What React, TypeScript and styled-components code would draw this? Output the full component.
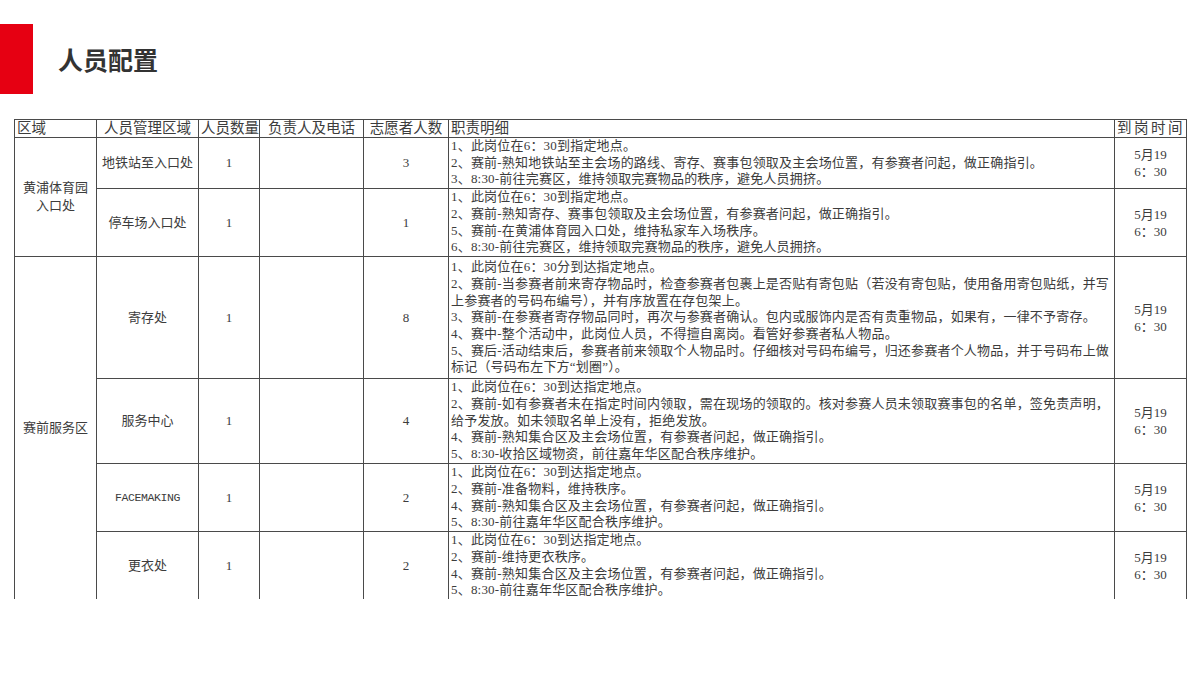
import React from "react";
import styled, { createGlobalStyle } from "styled-components";

const GlobalStyle = createGlobalStyle`
  html, body {
    margin: 0;
    padding: 0;
    background: #ffffff;
  }
  body {
    font-family: "Liberation Serif", "Noto Sans CJK SC", serif;
    color: #3c3c3c;
  }
`;

type Row = {
  name: string;
  count: string;
  volunteers: string;
  lines: string[];
  h: number;
  mono?: boolean;
};

type Group = {
  area: string[];
  rows: Row[];
};

const groups: Group[] = [
  {
    area: ["黄浦体育园", "入口处"],
    rows: [
      {
        name: "地铁站至入口处",
        count: "1",
        volunteers: "3",
        h: 51,
        lines: [
          "1、此岗位在6：30到指定地点。",
          "2、赛前-熟知地铁站至主会场的路线、寄存、赛事包领取及主会场位置，有参赛者问起，做正确指引。",
          "3、8:30-前往完赛区，维持领取完赛物品的秩序，避免人员拥挤。",
        ],
      },
      {
        name: "停车场入口处",
        count: "1",
        volunteers: "1",
        h: 68,
        lines: [
          "1、此岗位在6：30到指定地点。",
          "2、赛前-熟知寄存、赛事包领取及主会场位置，有参赛者问起，做正确指引。",
          "5、赛前-在黄浦体育园入口处，维持私家车入场秩序。",
          "6、8:30-前往完赛区，维持领取完赛物品的秩序，避免人员拥挤。",
        ],
      },
    ],
  },
  {
    area: ["赛前服务区"],
    rows: [
      {
        name: "寄存处",
        count: "1",
        volunteers: "8",
        h: 122,
        lines: [
          "1、此岗位在6：30分到达指定地点。",
          "2、赛前-当参赛者前来寄存物品时，检查参赛者包裹上是否贴有寄包贴（若没有寄包贴，使用备用寄包贴纸，并写",
          "上参赛者的号码布编号），并有序放置在存包架上。",
          "3、赛前-在参赛者寄存物品同时，再次与参赛者确认。包内或服饰内是否有贵重物品，如果有，一律不予寄存。",
          "4、赛中-整个活动中，此岗位人员，不得擅自离岗。看管好参赛者私人物品。",
          "5、赛后-活动结束后，参赛者前来领取个人物品时。仔细核对号码布编号，归还参赛者个人物品，并于号码布上做",
          "标记（号码布左下方“划圈”）。",
        ],
      },
      {
        name: "服务中心",
        count: "1",
        volunteers: "4",
        h: 85,
        lines: [
          "1、此岗位在6：30到达指定地点。",
          "2、赛前-如有参赛者未在指定时间内领取，需在现场的领取的。核对参赛人员未领取赛事包的名单，签免责声明，",
          "给予发放。如未领取名单上没有，拒绝发放。",
          "4、赛前-熟知集合区及主会场位置，有参赛者问起，做正确指引。",
          "5、8:30-收拾区域物资，前往嘉年华区配合秩序维护。",
        ],
      },
      {
        name: "FACEMAKING",
        count: "1",
        volunteers: "2",
        h: 68,
        mono: true,
        lines: [
          "1、此岗位在6：30到达指定地点。",
          "2、赛前-准备物料，维持秩序。",
          "4、赛前-熟知集合区及主会场位置，有参赛者问起，做正确指引。",
          "5、8:30-前往嘉年华区配合秩序维护。",
        ],
      },
      {
        name: "更衣处",
        count: "1",
        volunteers: "2",
        h: 68,
        lines: [
          "1、此岗位在6：30到达指定地点。",
          "2、赛前-维持更衣秩序。",
          "4、赛前-熟知集合区及主会场位置，有参赛者问起，做正确指引。",
          "5、8:30-前往嘉年华区配合秩序维护。",
        ],
      },
    ],
  },
];

const columns: { label: string; width: number; align: "left" | "center" }[] = [
  { label: "区域", width: 82, align: "left" },
  { label: "人员管理区域", width: 102, align: "center" },
  { label: "人员数量", width: 61, align: "center" },
  { label: "负责人及电话", width: 104, align: "center" },
  { label: "志愿者人数", width: 85, align: "center" },
  { label: "职责明细", width: 666, align: "left" },
  { label: "到岗时间", width: 72, align: "center" },
];

const Page = styled.div`
  width: 1200px;
  height: 675px;
  overflow: hidden;
  background: #ffffff;
`;

const Header = styled.header`
  display: flex;
  align-items: center;
  gap: 25px;
  padding-top: 24px;
`;

const RedBar = styled.div`
  width: 33px;
  height: 70px;
  background: #e60012;
`;

const Title = styled.h1`
  margin: 0;
  font-family: "Noto Sans CJK SC", "Noto Sans", sans-serif;
  font-size: 25px;
  font-weight: 700;
  color: #333333;
  line-height: 1;
`;

const TableFrame = styled.div`
  margin: 25px 0 0 14px;
  width: 1173px;
  height: 480px;
  overflow: hidden;
`;

const Table = styled.table`
  border-collapse: collapse;
  table-layout: fixed;
  width: 1173px;
`;

const HeadCell = styled.th<{ $align: "left" | "center"; $spaced?: boolean }>`
  border: 1px solid #4a4a4a;
  height: 17px;
  padding: 0 2px;
  font-size: 14.5px;
  font-weight: 400;
  line-height: 17px;
  color: #3c3c3c;
  white-space: nowrap;
  overflow: hidden;
  text-align: ${(p) => p.$align};
  letter-spacing: ${(p) => (p.$spaced ? "2.5px" : "0")};
`;

const BodyRow = styled.tr<{ $h: number }>`
  height: ${(p) => p.$h}px;
`;

const Cell = styled.td<{ $mono?: boolean }>`
  border: 1px solid #4a4a4a;
  padding: 0 2px;
  text-align: center;
  vertical-align: middle;
  font-size: ${(p) => (p.$mono ? "11.5px" : "13px")};
  font-family: ${(p) =>
    p.$mono
      ? `"Liberation Mono", "DejaVu Sans Mono", monospace`
      : `"Liberation Serif", "Noto Sans CJK SC", serif`};
  letter-spacing: ${(p) => (p.$mono ? "-0.4px" : "0")};
  line-height: 18px;
  color: #3c3c3c;
`;

const DutyCell = styled.td`
  border: 1px solid #4a4a4a;
  padding: 0 2px;
  vertical-align: middle;
  text-align: left;
`;

const DutyLine = styled.div`
  font-size: 13px;
  line-height: 16.7px;
  letter-spacing: 0.2px;
  white-space: nowrap;
  color: #3c3c3c;
`;

const TimeLine = styled.div`
  font-size: 13px;
  line-height: 17px;
`;

const App: React.FC = () => {
  return (
    <Page>
      <GlobalStyle />
      <Header>
        <RedBar />
        <Title>人员配置</Title>
      </Header>
      <TableFrame>
        <Table>
          <colgroup>
            {columns.map((c) => (
              <col key={c.label} style={{ width: c.width }} />
            ))}
          </colgroup>
          <thead>
            <tr>
              {columns.map((c) => (
                <HeadCell
                  key={c.label}
                  $align={c.align}
                  $spaced={c.label === "到岗时间"}
                >
                  {c.label}
                </HeadCell>
              ))}
            </tr>
          </thead>
          <tbody>
            {groups.map((g) =>
              g.rows.map((r, i) => (
                <BodyRow key={r.name} $h={r.h}>
                  {i === 0 && (
                    <Cell rowSpan={g.rows.length}>
                      {g.area.map((a) => (
                        <div key={a}>{a}</div>
                      ))}
                    </Cell>
                  )}
                  <Cell $mono={r.mono}>{r.name}</Cell>
                  <Cell>{r.count}</Cell>
                  <Cell />
                  <Cell>{r.volunteers}</Cell>
                  <DutyCell>
                    {r.lines.map((l, k) => (
                      <DutyLine key={k}>{l}</DutyLine>
                    ))}
                  </DutyCell>
                  <Cell>
                    <TimeLine>5月19</TimeLine>
                    <TimeLine>6：30</TimeLine>
                  </Cell>
                </BodyRow>
              ))
            )}
          </tbody>
        </Table>
      </TableFrame>
    </Page>
  );
};

export default App;
